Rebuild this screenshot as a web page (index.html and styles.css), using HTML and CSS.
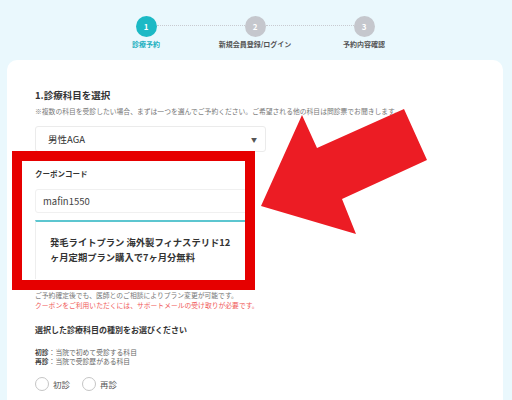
FILE: index.html
```html
<!DOCTYPE html>
<html lang="ja">
<head>
<meta charset="utf-8">
<link rel="stylesheet" href="styles.css">
</head>
<body>
<div class="steps">
  <div class="step active"><span class="num">1</span><span class="label">診療予約</span></div>
  <div class="step"><span class="num">2</span><span class="label">新規会員登録/ログイン</span></div>
  <div class="step"><span class="num">3</span><span class="label">予約内容確認</span></div>
</div>
<main class="card">
  <h2 class="title">1.診療科目を選択</h2>
  <p class="note">※複数の科目を受診したい場合、まずは一つを選んでご予約ください。ご希望される他の科目は問診票でお聞きします。</p>
  <div class="select"><span>男性AGA</span><span class="caret">▼</span></div>
  <p class="field-label">クーポンコード</p>
  <div class="input">mafin1550</div>
  <div class="promo">
    <p>発毛ライトプラン 海外製フィナステリド12<br>ヶ月定期プラン購入で7ヶ月分無料</p>
  </div>
  <p class="note small">ご予約確定後でも、医師とのご相談によりプラン変更が可能です。</p>
  <p class="note small warn">クーポンをご利用いただくには、サポートメールの受け取りが必要です。</p>
  <h3 class="sub">選択した診療科目の種別をお選びください</h3>
  <div class="defs">
    <p><b>初診</b>：当院で初めて受診する科目</p>
    <p><b>再診</b>：当院で受診歴がある科目</p>
  </div>
  <div class="radios">
    <label class="radio"><span class="dot"></span>初診</label>
    <label class="radio"><span class="dot"></span>再診</label>
  </div>
</main>
<div class="highlight"></div>
<svg class="arrow" width="512" height="400" viewBox="0 0 512 400">
  <polygon points="261,206 302,115 317,148 404,109 427,160 342,199 356,234" fill="#ec1c24"/>
</svg>
</body>
</html>
```
FILE: styles.css
```css
* { box-sizing: border-box; }
html, body { margin: 0; padding: 0; }
body {
  width: 512px;
  height: 400px;
  overflow: hidden;
  background: #eaf8fd;
  font-family: "Noto Sans CJK JP", "Noto Sans", sans-serif;
  color: #333;
  position: relative;
}
p, h2, h3 { margin: 0; }

.steps {
  display: grid;
  grid-template-columns: repeat(3, 109px);
  justify-content: center;
  padding-right: 2px;
  height: 60px;
}
.step {
  position: relative;
  display: flex;
  flex-direction: column;
  align-items: center;
}
.step:not(:first-child)::before {
  content: "";
  position: absolute;
  top: 25px;
  right: calc(50% + 10.5px);
  width: 88px;
  border-top: 1.5px dotted #c8cad0;
}
.num {
  margin-top: 15.5px;
  width: 21px;
  height: 21px;
  border-radius: 50%;
  background: #c5c7cd;
  color: #fff;
  font-size: 8px;
  font-weight: 700;
  display: flex;
  align-items: center;
  justify-content: center;
}
.label {
  margin-top: 3px;
  font-size: 7px;
  line-height: 9px;
  font-weight: 700;
  color: #555;
  white-space: nowrap;
}
.step.active .num { background: #1cb9c5; }
.step.active .label { color: #1cb0bf; }

.card {
  margin: 0 9px 0 7px;
  background: #fff;
  border-radius: 10px 10px 0 0;
  padding: 28px 28px 0;
  height: 340px;
}
.title {
  font-size: 9.5px;
  line-height: 14px;
  font-weight: 700;
  color: #333;
}
.note {
  margin-top: 4px;
  font-size: 6.8px;
  line-height: 10px;
  color: #777;
  white-space: nowrap;
}
.select {
  margin-top: 10px;
  width: 231px;
  height: 26px;
  border: 1px solid #ebebeb;
  border-radius: 3px;
  display: flex;
  align-items: center;
  justify-content: space-between;
  padding: 0 8px 0 12px;
  font-size: 9.5px;
  color: #333;
}
.caret { font-size: 6px; color: #555; }
.field-label {
  margin-top: 17px;
  font-size: 7.5px;
  line-height: 10px;
  font-weight: 700;
  color: #333;
}
.input {
  margin-top: 10px;
  width: 218px;
  height: 24px;
  border: 1px solid #f0f0f0;
  border-radius: 3px;
  display: flex;
  align-items: center;
  padding-left: 7px;
  font-size: 9.5px;
  color: #444;
}
.promo {
  margin-top: 7px;
  width: 218px;
  border-top: 2px solid #5cc6d0;
  border-left: 1px solid #eee;
  padding: 13px 0 15px 14px;
}
.promo p {
  font-size: 9.3px;
  line-height: 14.5px;
  font-weight: 700;
  color: #333;
  white-space: nowrap;
}
.note.small { margin-top: 0; }
.promo + .note.small { margin-top: 11px; }
.note.warn { color: #f05a5a; }
.sub {
  margin-top: 14px;
  font-size: 8px;
  line-height: 12px;
  font-weight: 700;
  color: #333;
}
.defs { margin-top: 11.5px; }
.defs p {
  font-size: 6.8px;
  line-height: 9px;
  color: #666;
}
.defs b { color: #444; }
.radios {
  margin-top: 11.5px;
  display: flex;
  gap: 12px;
}
.radio {
  display: flex;
  align-items: center;
  gap: 4px;
  font-size: 8.5px;
  color: #555;
}
.dot {
  width: 14px;
  height: 14px;
  border: 1px solid #c5c5c5;
  border-radius: 50%;
  background: #fff;
}

.highlight {
  position: absolute;
  left: 12px;
  top: 151px;
  width: 243px;
  height: 139px;
  border: 10px solid #e60000;
}
.arrow {
  position: absolute;
  left: 0;
  top: 0;
  pointer-events: none;
}
```
